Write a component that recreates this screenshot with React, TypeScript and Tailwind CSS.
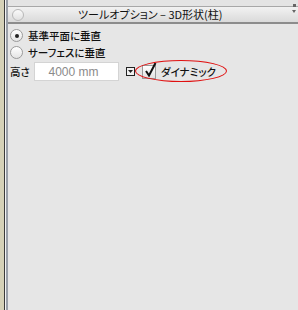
const jp = { fontFamily: '"Noto Sans CJK JP", "Liberation Sans", sans-serif' };

const Radio = ({ checked }: { checked?: boolean }) => (
  <span className="w-[13px] h-[13px] rounded-full border border-[#9a9a9a] bg-gradient-to-b from-[#ffffff] to-[#e4e4e4] flex items-center justify-center shrink-0">
    {checked && <span className="w-[4px] h-[4px] rounded-full bg-[#222]" />}
  </span>
);

const App = () => {
  return (
    <div className="w-[298px] h-[310px] flex bg-[#e6e6e6] overflow-hidden [font-feature-settings:'palt']" style={jp}>
      <div className="w-[4px] bg-[#d5d1b7]" />
      <div className="w-[1px] bg-[#3a3a3a]" />
      <div className="w-[1px] bg-[#f4f4f4]" />
      <div className="w-[2px] bg-[#9aa0a8]" />
      <div className="flex-1 flex flex-col">
        <div className="h-[7px] bg-[#e4e4e4] border-b border-[#a8a8a8] relative">
          <span className="absolute right-[2px] top-[4px] w-[3px] h-[3px] bg-[#666]" />
        </div>
        <div className="h-[17px] bg-gradient-to-b from-[#f2f2f2] to-[#dadada] border-b-2 border-[#8c8c8c] flex items-center relative">
          <span className="ml-[4px] w-[12px] h-[12px] rounded-full border border-[#b8b8b8] bg-gradient-to-b from-[#fafafa] to-[#e0e0e0]" />
          <span className="absolute left-[70px] top-[0px] text-[11px] leading-[15px] text-[#111]">ツールオプション – 3D形状(柱)</span>
          <span className="absolute right-[2px] top-[3px] w-0 h-0 border-l-[2px] border-r-[2px] border-t-[3px] border-l-transparent border-r-transparent border-t-[#666]" />
        </div>
        <div className="flex flex-col pl-[2px] pt-[5px] text-[10.5px] font-medium text-[#111]">
          <div className="flex items-center gap-[5px] h-[13px]">
            <Radio checked />
            <span>基準平面に垂直</span>
          </div>
          <div className="flex items-center gap-[5px] h-[13px] mt-[4px]">
            <Radio />
            <span>サーフェスに垂直</span>
          </div>
          <div className="flex items-center h-[19px] relative mt-[3px]">
            <span className="w-[24px]">高さ</span>
            <div className="w-[85px] h-[19px] bg-white border border-[#d4d4d4] flex items-center justify-center pr-[6px] text-[12px] font-normal text-[#8a8a8a]" style={{ fontFamily: '"Liberation Sans", sans-serif' }}>
              4000 mm
            </div>
            <svg className="ml-[7px]" width="9" height="9" viewBox="0 0 9 9">
              <rect x="0.5" y="0.5" width="8" height="8" fill="#f0f0f0" stroke="#222" />
              <path d="M2 3 L4.5 6 L7 3 Z" fill="#222" />
            </svg>
            <span className="ml-[7px] w-[14px] h-[14px] border border-[#9a9a9a] bg-gradient-to-b from-[#ffffff] to-[#e2e2e2] relative">
              <svg className="absolute left-[1px] top-[-4px]" width="13" height="16" viewBox="0 0 13 16">
                <path d="M2 9 L5 13.5 L11.5 1" stroke="#111" strokeWidth="2" fill="none" />
              </svg>
            </span>
            <span className="ml-[5px]">ダイナミック</span>
            <span className="absolute left-[125px] top-[-2px] w-[92px] h-[22px] rounded-[50%] border-[1.5px] border-[#e01010]" />
          </div>
        </div>
      </div>
    </div>
  );
};

export default App;
